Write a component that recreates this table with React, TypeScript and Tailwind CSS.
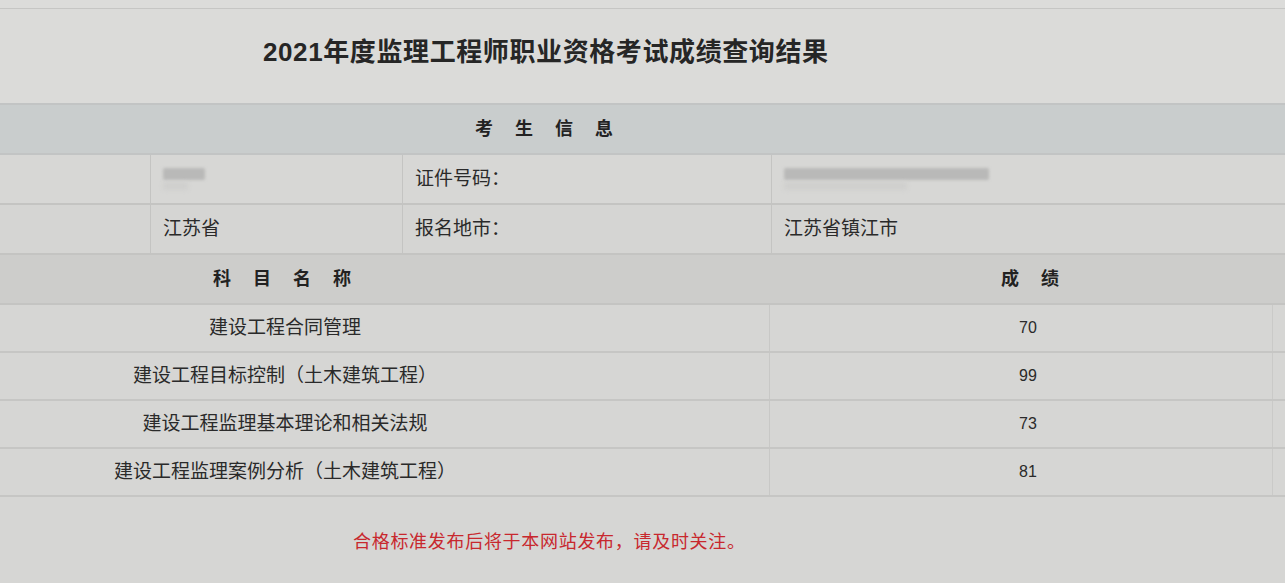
const font = { fontFamily: '"Liberation Sans", "Noto Sans CJK SC", sans-serif' };

const subjects = [
  { name: '建设工程合同管理', score: '70' },
  { name: '建设工程目标控制（土木建筑工程）', score: '99' },
  { name: '建设工程监理基本理论和相关法规', score: '73' },
  { name: '建设工程监理案例分析（土木建筑工程）', score: '81' },
];

function Blur({ w }: { w: number }) {
  // masked personal data in the photo
  return (
    <div className="flex flex-col gap-[2px]">
      <div className="h-[12px] rounded-[2px] bg-[#b9b9b8] blur-[1.5px]" style={{ width: w }} />
      <div className="h-[8px] rounded-[2px] bg-[#cfcfcd] blur-[2px]" style={{ width: w * 0.6 }} />
    </div>
  );
}

export default function App() {
  return (
    <div className="w-[1285px] h-[583px] overflow-hidden bg-[#d6d6d4] text-[#2a2a2a]" style={font}>
      {/* title area */}
      <div className="h-[8px] bg-[#dcdcda]" />
      <div className="h-[95px] border-t border-[#c6c6c4] bg-[#dbdbd9] flex items-center pl-[263px] pb-[8px]">
        <h1 className="text-[26px] font-bold tracking-[0.6px] text-[#262626]">2021年度监理工程师职业资格考试成绩查询结果</h1>
      </div>

      {/* 考生信息 */}
      <div className="h-[52px] border-y-2 border-[#c2c4c4] bg-[#c9cdcd] flex items-center pl-[475px]">
        <span className="text-[18px] font-bold tracking-[22px] text-[#222]">考生信息</span>
      </div>

      <div className="grid grid-cols-[151px_252px_369px_1fr] h-[50px] border-b-2 border-[#c4c4c2] bg-[#d7d7d5] text-[19px]">
        <div className="border-r border-[#c4c4c2]" />
        <div className="border-r border-[#c4c4c2] flex items-center pl-[12px]">
          <Blur w={42} />
        </div>
        <div className="border-r border-[#c4c4c2] flex items-center pl-[12px]">证件号码：</div>
        <div className="flex items-center pl-[12px]">
          <Blur w={205} />
        </div>
      </div>
      <div className="grid grid-cols-[151px_252px_369px_1fr] h-[50px] border-b-2 border-[#c4c4c2] bg-[#d5d5d3] text-[19px]">
        <div className="border-r border-[#c4c4c2]" />
        <div className="border-r border-[#c4c4c2] flex items-center pl-[12px]">江苏省</div>
        <div className="border-r border-[#c4c4c2] flex items-center pl-[12px]">报名地市：</div>
        <div className="flex items-center pl-[12px]">江苏省镇江市</div>
      </div>

      {/* 科目 */}
      <div className="grid grid-cols-[770px_1fr] h-[50px] border-b-2 border-[#c4c4c2] bg-[#cdcdcb] text-[18px] font-bold text-[#222]">
        <div className="flex items-center pl-[213px] tracking-[22px]">科目名称</div>
        <div className="flex items-center pl-[231px] tracking-[22px]">成绩</div>
      </div>
      {subjects.map((s) => (
        <div key={s.name} className="grid grid-cols-[570px_200px_502px_1fr] h-[48px] border-b-2 border-[#c6c6c4] bg-[#d6d6d4] text-[19px]">
          <div className="flex items-center justify-center">{s.name}</div>
          <div className="border-r border-[#c8c8c6]" />
          <div className="flex items-center justify-center pl-[14px] text-[16px]">{s.score}</div>
          <div className="border-l border-[#cacac8]" />
        </div>
      ))}

      <div className="pt-[32px] pl-[353px] text-[18px] tracking-[0.7px] text-[#c8282e]">合格标准发布后将于本网站发布，请及时关注。</div>
    </div>
  );
}
